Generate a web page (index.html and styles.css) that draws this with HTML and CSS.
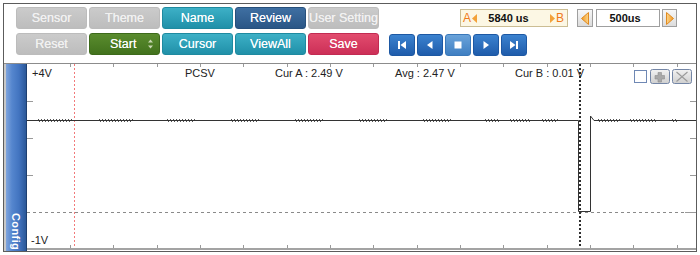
FILE: index.html
```html
<!DOCTYPE html>
<html>
<head>
<meta charset="utf-8">
<link rel="stylesheet" href="styles.css">
</head>
<body>
<div class="frame">
  <div class="toolbar">
    <div class="btn-grid">
      <div class="btn gray">Sensor</div>
      <div class="btn gray">Theme</div>
      <div class="btn teal">Name</div>
      <div class="btn navy">Review</div>
      <div class="btn gray">User Setting</div>
      <div class="btn gray">Reset</div>
      <div class="btn green start"><span>Start</span>
        <svg class="updown" width="5" height="10" viewBox="0 0 5 10"><path d="M2.5 0.5 L5 3.5 H0 Z M0 6.5 H5 L2.5 9.5 Z" fill="#c9d8b4"/></svg>
      </div>
      <div class="btn teal">Cursor</div>
      <div class="btn teal">ViewAll</div>
      <div class="btn red">Save</div>
    </div>
    <div class="right">
      <div class="timebar">
        <div class="ab-box">
          <span class="ab-letter">A</span>
          <svg class="ab-tri" width="5" height="9" viewBox="0 0 5 9"><path d="M5 0 V9 L0 4.5 Z" fill="#f3a23a"/></svg>
          <span class="ab-value">5840 us</span>
          <svg class="ab-tri" width="5" height="9" viewBox="0 0 5 9"><path d="M0 0 V9 L5 4.5 Z" fill="#f3a23a"/></svg>
          <span class="ab-letter">B</span>
        </div>
        <div class="arrow-btn left-arrow">
          <svg width="8" height="13" viewBox="0 0 8 13"><defs><linearGradient id="og1" x1="0" y1="0" x2="1" y2="0"><stop offset="0" stop-color="#f29a22"/><stop offset="1" stop-color="#fcd48a"/></linearGradient></defs><path d="M7.5 0.5 V12.5 L0.5 6.5 Z" fill="url(#og1)" stroke="#e08a20" stroke-width="1"/></svg>
        </div>
        <div class="time-box">500us</div>
        <div class="arrow-btn right-arrow">
          <svg width="8" height="13" viewBox="0 0 8 13"><defs><linearGradient id="og2" x1="0" y1="0" x2="1" y2="0"><stop offset="0" stop-color="#fcd48a"/><stop offset="1" stop-color="#f29a22"/></linearGradient></defs><path d="M0.5 0.5 V12.5 L7.5 6.5 Z" fill="url(#og2)" stroke="#e08a20" stroke-width="1"/></svg>
        </div>
      </div>
      <div class="media">
        <div class="mbtn"><svg width="10" height="10" viewBox="0 0 10 10"><rect x="1" y="1" width="2" height="8" fill="#fff"/><path d="M9 1 V9 L3.5 5 Z" fill="#fff"/></svg></div>
        <div class="mbtn"><svg width="10" height="10" viewBox="0 0 10 10"><path d="M7.5 1 V9 L2 5 Z" fill="#fff"/></svg></div>
        <div class="mbtn stop"><svg width="10" height="10" viewBox="0 0 10 10"><rect x="1.5" y="1.5" width="7" height="7" fill="#fff"/></svg></div>
        <div class="mbtn"><svg width="10" height="10" viewBox="0 0 10 10"><path d="M2.5 1 V9 L8 5 Z" fill="#fff"/></svg></div>
        <div class="mbtn"><svg width="10" height="10" viewBox="0 0 10 10"><path d="M1 1 V9 L6.5 5 Z" fill="#fff"/><rect x="7" y="1" width="2" height="8" fill="#fff"/></svg></div>
      </div>
    </div>
  </div>
  <div class="chart">
    <div class="config"><span>Config</span></div>
    <div class="plot">
      <svg class="scope" width="669" height="187" viewBox="0 0 669 187">
        <defs>
          <linearGradient id="gbtn" x1="0" y1="0" x2="0" y2="1"><stop offset="0" stop-color="#f2f2f2"/><stop offset="1" stop-color="#cfcfcf"/></linearGradient>
        </defs>
        <rect x="0" y="184" width="669" height="2" fill="#a3a3a3"/>
        <path class="ticks" d="M43.5 0v3M86.5 0v3M130.5 0v3M173.5 0v3M216.5 0v3M260.5 0v3M303.5 0v3M346.5 0v3M390.5 0v3M433.5 0v3M476.5 0v3M520.5 0v3M563.5 0v3M606.5 0v3M650.5 0v3
          M43.5 181v3M86.5 181v3M130.5 181v3M173.5 181v3M216.5 181v3M260.5 181v3M303.5 181v3M346.5 181v3M390.5 181v3M433.5 181v3M476.5 181v3M520.5 181v3M563.5 181v3M606.5 181v3M650.5 181v3
          M0 37.5h6M0 74.5h6M0 111.5h6M663 37.5h6M663 74.5h6M663 111.5h6M658 148.5h11"/>
        <line class="zero" x1="0" y1="148.5" x2="658" y2="148.5"/>
        <line class="cur-a" x1="47.5" y1="0" x2="47.5" y2="184"/>
        <path class="signal" d="M0 56.5 H551.5 V147.5 H563.5 V52 L567 56.5 H669"/>
        <g class="noise">
          <line x1="11" y1="55.5" x2="45" y2="55.5"/><line x1="12" y1="57.5" x2="45" y2="57.5"/>
          <line x1="72" y1="55.5" x2="106" y2="55.5"/><line x1="73" y1="57.5" x2="106" y2="57.5"/>
          <line x1="140" y1="55.5" x2="168" y2="55.5"/><line x1="141" y1="57.5" x2="168" y2="57.5"/>
          <line x1="204" y1="55.5" x2="232" y2="55.5"/><line x1="205" y1="57.5" x2="232" y2="57.5"/>
          <line x1="268" y1="55.5" x2="296" y2="55.5"/><line x1="269" y1="57.5" x2="296" y2="57.5"/>
          <line x1="332" y1="55.5" x2="360" y2="55.5"/><line x1="333" y1="57.5" x2="360" y2="57.5"/>
          <line x1="396" y1="55.5" x2="424" y2="55.5"/><line x1="397" y1="57.5" x2="424" y2="57.5"/>
          <line x1="458" y1="55.5" x2="473" y2="55.5"/><line x1="459" y1="57.5" x2="473" y2="57.5"/>
          <line x1="483" y1="55.5" x2="503" y2="55.5"/><line x1="484" y1="57.5" x2="503" y2="57.5"/>
          <line x1="515" y1="55.5" x2="531" y2="55.5"/><line x1="516" y1="57.5" x2="531" y2="57.5"/>
          <line x1="571" y1="55.5" x2="593" y2="55.5"/><line x1="572" y1="57.5" x2="593" y2="57.5"/>
          <line x1="603" y1="55.5" x2="630" y2="55.5"/><line x1="604" y1="57.5" x2="630" y2="57.5"/>
          <line x1="645" y1="55.5" x2="651" y2="55.5"/><line x1="646" y1="57.5" x2="651" y2="57.5"/>
        </g>
        <line class="cur-b" x1="553" y1="0" x2="553" y2="184"/>
        <g class="labels">
          <text x="5" y="13">+4V</text>
          <text x="158" y="13">PCSV</text>
          <text x="248" y="13">Cur A : 2.49 V</text>
          <text x="368" y="13">Avg : 2.47 V</text>
          <text x="488" y="13">Cur B : 0.01 V</text>
          <text x="4" y="180">-1V</text>
        </g>
        <rect x="607.5" y="6.5" width="12" height="12" fill="#fff" stroke="#6f88b4"/>
        <rect x="623.5" y="5.5" width="19" height="14" rx="2" fill="url(#gbtn)" stroke="#7486a6"/>
        <path d="M631 8.5 h3.5 v3 h3 v3.5 h-3 v3 h-3.5 v-3 h-3 v-3.5 h3 Z" fill="#a8a8a8" stroke="#8e8e8e" stroke-width="0.6"/>
        <rect x="645.5" y="5.5" width="19" height="14" rx="2" fill="url(#gbtn)" stroke="#7486a6"/>
        <path d="M649.5 8 L660.5 17.5 M660.5 8 L649.5 17.5" stroke="#9a9a9a" stroke-width="1.1"/>
      </svg>
    </div>
  </div>
</div>
</body>
</html>
```
FILE: styles.css
```css
* { box-sizing: border-box; }
html, body { margin: 0; padding: 0; background: #fff; }
body {
  width: 700px;
  height: 255px;
  overflow: hidden;
  font-family: "Liberation Sans", Arial, sans-serif;
}
.frame {
  margin: 3px 0 0 3px;
  width: 694px;
  height: 249px;
  border: 1px solid #5c5c5c;
  display: flex;
  flex-direction: column;
}
.toolbar {
  height: 59px;
  display: flex;
  padding: 3px 0 0 12px;
}
.btn-grid {
  display: grid;
  grid-template-columns: repeat(5, 71px);
  grid-auto-rows: 22px;
  column-gap: 2px;
  row-gap: 4px;
}
.btn {
  border-radius: 3px;
  display: flex;
  align-items: center;
  justify-content: center;
  font-size: 12.5px;
  color: #fff;
  border: 1px solid rgba(0, 0, 0, 0.12);
  text-shadow: 0 0 0.4px rgba(255, 255, 255, 0.8);
  white-space: nowrap;
}
.btn.gray { background: linear-gradient(#cbcbcb, #bdbdbd); color: #f1f1f1; border-color: #bcbcbc; }
.btn.teal { background: linear-gradient(#3db0c6, #2090a8); border-color: #1f8aa0; }
.btn.navy { background: linear-gradient(#3f6fa2, #2a5686); border-color: #27507c; }
.btn.green { background: linear-gradient(#5a8c2e, #42721d); border-color: #3d6a1b; }
.btn.red { background: linear-gradient(#e24c6e, #cc2f57); border-color: #c22b52; }
.btn.start {
  justify-content: flex-start;
  padding-left: 20px;
  gap: 12px;
}
.updown { display: block; }

.right {
  margin-left: 10px;
  display: flex;
  flex-direction: column;
  padding-top: 2px;
}
.timebar {
  display: flex;
  height: 18px;
  padding-left: 71px;
}
.ab-box {
  width: 108px;
  height: 18px;
  border: 1px solid #cbbd93;
  background: #fcf7e4;
  display: flex;
  align-items: center;
  padding: 0 3px 0 2px;
}
.ab-letter { color: #f07a1a; font-size: 12px; }
.ab-tri { display: block; margin: 0 1px; }
.ab-value {
  flex: 1;
  text-align: center;
  font-size: 11px;
  font-weight: bold;
  color: #111;
  padding-right: 10px;
}
.arrow-btn {
  height: 18px;
  border: 1px solid #9f9f9f;
  background: linear-gradient(#f7f7f7, #dcdcdc);
  display: flex;
  align-items: center;
  justify-content: center;
}
.arrow-btn svg { display: block; }
.left-arrow { width: 16px; margin-left: 9px; }
.right-arrow { width: 15px; margin-left: 2px; }
.time-box {
  width: 64px;
  height: 18px;
  margin-left: 3px;
  border: 1px solid #9f9f9f;
  background: #fff;
  font-size: 11px;
  font-weight: bold;
  color: #111;
  display: flex;
  align-items: center;
  justify-content: center;
  padding-right: 6px;
}
.media {
  display: flex;
  gap: 2px;
  margin-top: 7px;
}
.mbtn {
  width: 26px;
  height: 22px;
  border-radius: 3px;
  background: linear-gradient(#3b82cf, #1f5cab);
  border: 1px solid #1d58a3;
  display: flex;
  align-items: center;
  justify-content: center;
}
.mbtn svg { display: block; }
.mbtn.stop { background: linear-gradient(#6aa3da, #3f7fc2); border-color: #3a78b9; }

.chart {
  flex: 1;
  display: flex;
  border-top: 1px solid #8c8c8c;
}
.config {
  width: 23px;
  border-left: 2px solid #c8c8c8;
  border-right: 1px solid #1e3f70;
  background: linear-gradient(to right, #7fa4dc 0%, #5586ce 30%, #4274c0 65%, #2b5898 100%);
  display: flex;
  align-items: flex-end;
  justify-content: center;
}
.config span {
  writing-mode: vertical-rl;
  color: #fff;
  font-size: 11px;
  font-weight: bold;
  letter-spacing: 0.4px;
  padding-bottom: 1px;
}
.plot { flex: 1; }
.scope { display: block; }
.ticks { stroke: #9a9a9a; stroke-width: 1; fill: none; }
.zero { stroke: #8a8a8a; stroke-width: 1; stroke-dasharray: 3 3; }
.cur-a { stroke: #f27a7a; stroke-width: 1; stroke-dasharray: 2 2; }
.cur-b { stroke: #2e2e2e; stroke-width: 2; stroke-dasharray: 2 2; }
.signal { stroke: #333; stroke-width: 1; fill: none; }
.noise line { stroke: #555; stroke-width: 1; stroke-dasharray: 1 2; }
.labels text {
  font-family: "Liberation Sans", Arial, sans-serif;
  font-size: 11px;
  fill: #222;
}
```
